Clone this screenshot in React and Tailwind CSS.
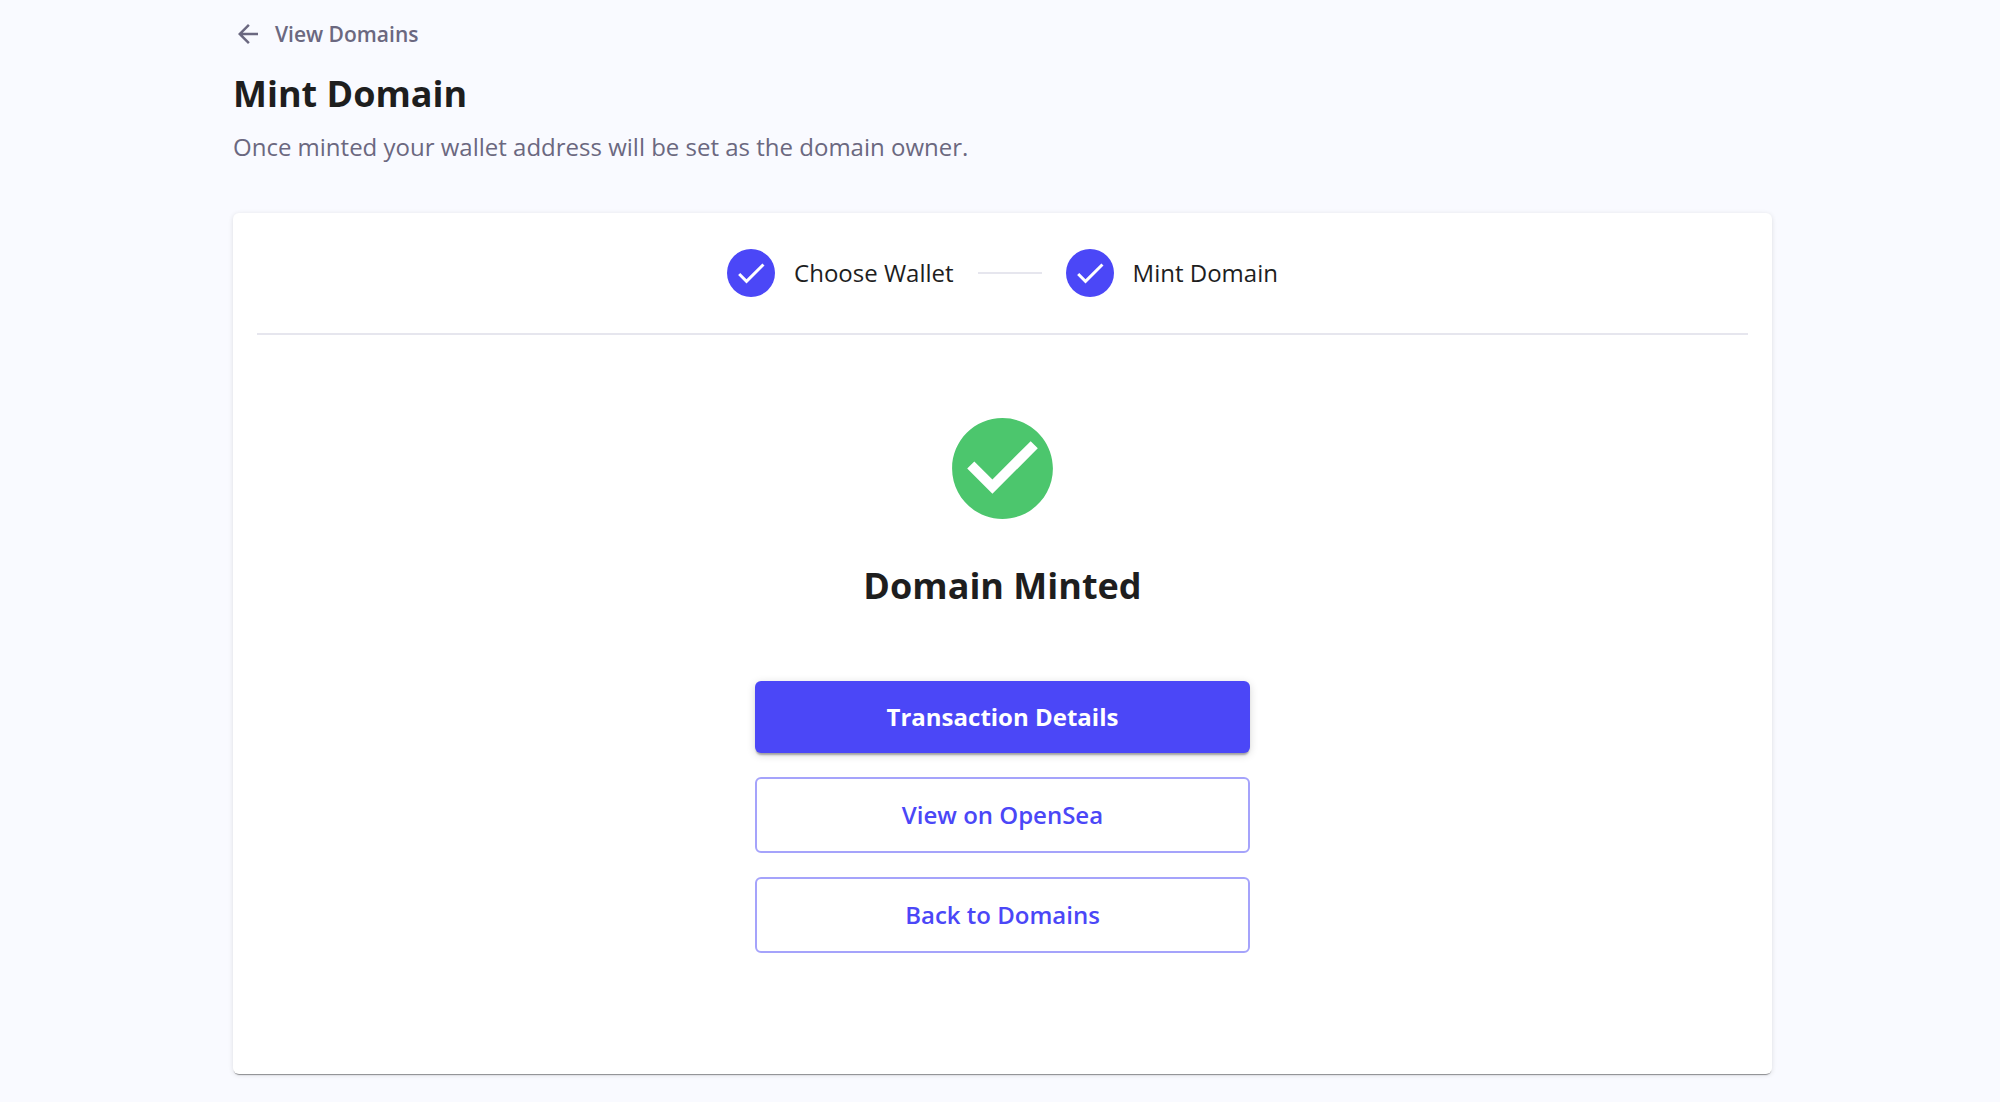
import React from 'react';

// Icons
const ArrowBackIcon = ({ className }) => (
  <svg viewBox="0 0 24 24" fill="currentColor" className={className} aria-hidden="true">
    <path d="M20 11H7.83l5.59-5.59L12 4l-8 8 8 8 1.41-1.41L7.83 13H20v-2z" />
  </svg>
);

const CheckIcon = ({ className }) => (
  <svg viewBox="0 0 24 24" fill="currentColor" className={className} aria-hidden="true">
    <path d="M9 16.17L4.83 12l-1.42 1.41L9 19 21 7l-1.41-1.41z" />
  </svg>
);

const CheckCircleIcon = ({ className }) => (
  <svg viewBox="0 0 24 24" fill="currentColor" className={className} aria-hidden="true">
    <path d="M12 2C6.48 2 2 6.48 2 12s4.48 10 10 10 10-4.48 10-10S17.52 2 12 2zm-2 15l-5-5 1.41-1.41L10 14.17l7.59-7.59L19 8l-9 9z" />
  </svg>
);

// Completed step in the stepper
const Step = ({ label }) => (
  <li className="flex items-center gap-[19px]">
    <span className="flex size-12 items-center justify-center rounded-full bg-[#4b47f7] text-white">
      <CheckIcon className="size-9" />
    </span>
    <span className="text-2xl text-[#1e1e1e]">{label}</span>
  </li>
);

const OutlinedButton = ({ children }) => (
  <button
    type="button"
    className="w-full rounded-md border-2 border-[#a5a3fb] py-5 text-2xl font-semibold text-[#4b47f7]"
  >
    {children}
  </button>
);

export default function App() {
  return (
    <div className="min-h-screen bg-[#f9faff] pl-[5px] font-['Open_Sans','Noto_Sans',sans-serif] text-[#1e1e1e]">
      <main className="mx-auto max-w-[1539px] pt-4 pb-7">
        <a href="#domains" className="inline-flex items-center gap-3 text-[#6b6880]">
          <ArrowBackIcon className="size-[30px]" />
          <span className="text-[21px] leading-9 font-semibold">View Domains</span>
        </a>
        <h1 className="mt-[14px] text-4xl leading-[50px] font-bold">Mint Domain</h1>
        <p className="mt-[10px] text-2xl leading-9 text-[#6b6880]">
          Once minted your wallet address will be set as the domain owner.
        </p>

        <section className="mt-12 rounded-md bg-white px-6 pb-[121px] shadow-[0_2px_1px_-1px_rgba(0,0,0,0.4),0_1px_5px_rgba(0,0,0,0.12)]">
          <ol className="flex items-center justify-center gap-6 border-b-2 border-[#e6e6ee] py-9">
            <Step label="Choose Wallet" />
            <li aria-hidden="true" className="h-[2px] w-16 bg-[#e6e6ee]" />
            <Step label="Mint Domain" />
          </ol>

          <div className="mx-auto flex max-w-[495px] flex-col items-center pt-[73px]">
            <CheckCircleIcon className="size-[121px] text-[#4cc66d]" />
            <h2 className="mt-8 text-4xl leading-[50px] font-bold">Domain Minted</h2>
            <div className="mt-[70px] flex w-full flex-col gap-6">
              <button
                type="button"
                className="w-full rounded-md bg-[#4b47f7] py-5 text-2xl font-bold text-white shadow-[0_3px_2px_-1px_rgba(0,0,0,0.3),0_2px_8px_rgba(0,0,0,0.16)]"
              >
                Transaction Details
              </button>
              <OutlinedButton>View on OpenSea</OutlinedButton>
              <OutlinedButton>Back to Domains</OutlinedButton>
            </div>
          </div>
        </section>
      </main>
    </div>
  );
}
